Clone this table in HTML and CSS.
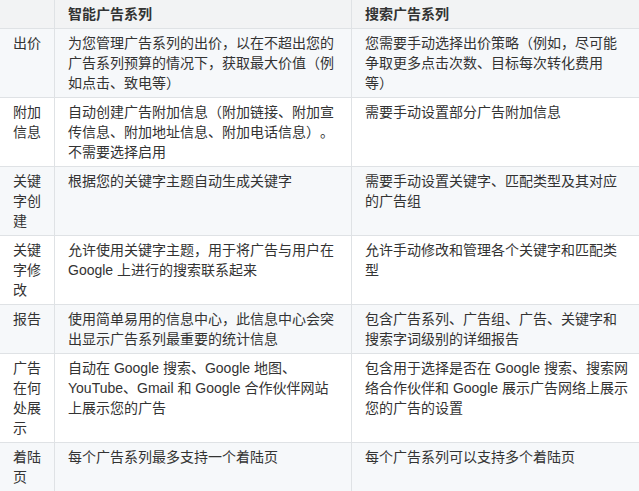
FILE: index.html
```html
<!DOCTYPE html>
<html lang="zh-CN">
<head>
<meta charset="utf-8">
<link rel="stylesheet" href="styles.css">
</head>
<body>
<table class="cmp">
  <colgroup>
    <col class="c1">
    <col class="c2">
    <col class="c3">
  </colgroup>
  <thead>
    <tr><th></th><th>智能广告系列</th><th class="last">搜索广告系列</th></tr>
  </thead>
  <tbody>
    <tr><td>出价</td><td>为您管理广告系列的出价，以在不超出您的广告系列预算的情况下，获取最大价值（例如点击、致电等）</td><td class="last">您需要手动选择出价策略（例如，尽可能争取更多点击次数、目标每次转化费用等）</td></tr>
    <tr><td>附加信息</td><td>自动创建广告附加信息（附加链接、附加宣传信息、附加地址信息、附加电话信息）。不需要选择启用</td><td class="last">需要手动设置部分广告附加信息</td></tr>
    <tr><td>关键字创建</td><td>根据您的关键字主题自动生成关键字</td><td class="last">需要手动设置关键字、匹配类型及其对应的广告组</td></tr>
    <tr><td>关键字修改</td><td>允许使用关键字主题，用于将广告与用户在 Google 上进行的搜索联系起来</td><td class="last">允许手动修改和管理各个关键字和匹配类型</td></tr>
    <tr><td>报告</td><td>使用简单易用的信息中心，此信息中心会突出显示广告系列最重要的统计信息</td><td class="last">包含广告系列、广告组、广告、关键字和搜索字词级别的详细报告</td></tr>
    <tr><td>广告在何处展示</td><td>自动在 Google 搜索、Google 地图、YouTube、Gmail 和 Google 合作伙伴网站上展示您的广告</td><td class="last">包含用于选择是否在 Google 搜索、搜索网络合作伙伴和 Google 展示广告网络上展示您的广告的设置</td></tr>
    <tr><td>着陆页</td><td>每个广告系列最多支持一个着陆页</td><td class="last">每个广告系列可以支持多个着陆页</td></tr>
  </tbody>
</table>
</body>
</html>
```
FILE: styles.css
```css
html, body {
  margin: 0;
  padding: 0;
  background: #fff;
  overflow: hidden;
}
body {
  font-family: "Liberation Sans", "Noto Sans CJK SC", sans-serif;
  font-size: 14px;
  line-height: 20px;
  color: #333;
  text-spacing-trim: space-all;
}
.cmp {
  border-collapse: collapse;
  table-layout: fixed;
  width: 650px;
  margin: -1px 0 0 -1px;
}
.c1 { width: 55px; }
.c2 { width: 297px; }
.c3 { width: 298px; }
.cmp th,
.cmp td {
  border: 1px solid #dfe2e5;
  padding: 4px 12px 4px 13px;
  text-align: left;
  vertical-align: top;
}
.cmp .last {
  padding-right: 21px;
}
.cmp th {
  font-weight: bold;
  background: #f2f3f4;
}
.cmp tbody tr:nth-child(odd) {
  background: #f6f8fa;
}
.cmp tbody tr:nth-child(even) {
  background: #fff;
}
```
